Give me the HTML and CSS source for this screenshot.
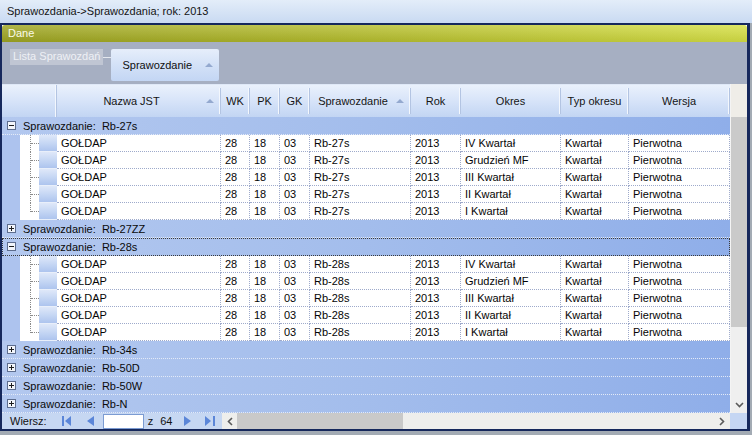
FILE: index.html
```html
<!DOCTYPE html>
<html lang="pl">
<head>
<meta charset="utf-8">
<title>Sprawozdania</title>
<link rel="stylesheet" href="styles.css">
</head>
<body>
<div class="titlebar">Sprawozdania-&gt;Sprawozdania; rok: 2013</div>
<div class="frame">
  <div class="dane">Dane</div>
  <div class="grouppanel">
    <div class="grp-label">Lista Sprawozdań</div>
    <div class="grp-line"></div>
    <div class="grp-btn"><span>Sprawozdanie</span><span class="sort"></span></div>
  </div>
  <div class="gridwrap">
    <div class="gridmain">
      <div class="hdr">
        <div class="hc"></div>
        <div class="hc sorted"><span class="ht">Nazwa JST</span><span class="sort"></span></div>
        <div class="hc">WK</div>
        <div class="hc">PK</div>
        <div class="hc">GK</div>
        <div class="hc sorted"><span class="ht">Sprawozdanie</span><span class="sort"></span></div>
        <div class="hc">Rok</div>
        <div class="hc">Okres</div>
        <div class="hc">Typ okresu</div>
        <div class="hc">Wersja</div>
      </div>
      <div class="rows">
        <div class="grow"><span class="exp minus"></span><span class="gt">Sprawozdanie:  Rb-27s</span></div>
        <div class="drow"><div class="strip"></div><div class="tree"></div><div class="ind"></div><div class="c">GOŁDAP</div><div class="c">28</div><div class="c">18</div><div class="c">03</div><div class="c">Rb-27s</div><div class="c">2013</div><div class="c">IV Kwartał</div><div class="c">Kwartał</div><div class="c">Pierwotna</div></div>
        <div class="drow"><div class="strip"></div><div class="tree"></div><div class="ind"></div><div class="c">GOŁDAP</div><div class="c">28</div><div class="c">18</div><div class="c">03</div><div class="c">Rb-27s</div><div class="c">2013</div><div class="c">Grudzień MF</div><div class="c">Kwartał</div><div class="c">Pierwotna</div></div>
        <div class="drow"><div class="strip"></div><div class="tree"></div><div class="ind"></div><div class="c">GOŁDAP</div><div class="c">28</div><div class="c">18</div><div class="c">03</div><div class="c">Rb-27s</div><div class="c">2013</div><div class="c">III Kwartał</div><div class="c">Kwartał</div><div class="c">Pierwotna</div></div>
        <div class="drow"><div class="strip"></div><div class="tree"></div><div class="ind"></div><div class="c">GOŁDAP</div><div class="c">28</div><div class="c">18</div><div class="c">03</div><div class="c">Rb-27s</div><div class="c">2013</div><div class="c">II Kwartał</div><div class="c">Kwartał</div><div class="c">Pierwotna</div></div>
        <div class="drow"><div class="strip"></div><div class="tree last"></div><div class="ind"></div><div class="c">GOŁDAP</div><div class="c">28</div><div class="c">18</div><div class="c">03</div><div class="c">Rb-27s</div><div class="c">2013</div><div class="c">I Kwartał</div><div class="c">Kwartał</div><div class="c">Pierwotna</div></div>
        <div class="grow"><span class="exp plus"></span><span class="gt">Sprawozdanie:  Rb-27ZZ</span></div>
        <div class="grow focus"><span class="exp minus"></span><span class="gt">Sprawozdanie:  Rb-28s</span></div>
        <div class="drow"><div class="strip"></div><div class="tree"></div><div class="ind"></div><div class="c">GOŁDAP</div><div class="c">28</div><div class="c">18</div><div class="c">03</div><div class="c">Rb-28s</div><div class="c">2013</div><div class="c">IV Kwartał</div><div class="c">Kwartał</div><div class="c">Pierwotna</div></div>
        <div class="drow"><div class="strip"></div><div class="tree"></div><div class="ind"></div><div class="c">GOŁDAP</div><div class="c">28</div><div class="c">18</div><div class="c">03</div><div class="c">Rb-28s</div><div class="c">2013</div><div class="c">Grudzień MF</div><div class="c">Kwartał</div><div class="c">Pierwotna</div></div>
        <div class="drow"><div class="strip"></div><div class="tree"></div><div class="ind"></div><div class="c">GOŁDAP</div><div class="c">28</div><div class="c">18</div><div class="c">03</div><div class="c">Rb-28s</div><div class="c">2013</div><div class="c">III Kwartał</div><div class="c">Kwartał</div><div class="c">Pierwotna</div></div>
        <div class="drow"><div class="strip"></div><div class="tree"></div><div class="ind"></div><div class="c">GOŁDAP</div><div class="c">28</div><div class="c">18</div><div class="c">03</div><div class="c">Rb-28s</div><div class="c">2013</div><div class="c">II Kwartał</div><div class="c">Kwartał</div><div class="c">Pierwotna</div></div>
        <div class="drow"><div class="strip"></div><div class="tree last"></div><div class="ind"></div><div class="c">GOŁDAP</div><div class="c">28</div><div class="c">18</div><div class="c">03</div><div class="c">Rb-28s</div><div class="c">2013</div><div class="c">I Kwartał</div><div class="c">Kwartał</div><div class="c">Pierwotna</div></div>
        <div class="grow"><span class="exp plus"></span><span class="gt">Sprawozdanie:  Rb-34s</span></div>
        <div class="grow"><span class="exp plus"></span><span class="gt">Sprawozdanie:  Rb-50D</span></div>
        <div class="grow"><span class="exp plus"></span><span class="gt">Sprawozdanie:  Rb-50W</span></div>
        <div class="grow"><span class="exp plus"></span><span class="gt">Sprawozdanie:  Rb-N</span></div>
      </div>
    </div>
    <div class="vscroll">
      <div class="vs-head"></div>
      <div class="vs-thumb"></div>
      <div class="vs-track"></div>
      <div class="vs-down"><svg width="9" height="6" viewBox="0 0 9 6"><path d="M1 1 L4.5 4.5 L8 1" fill="none" stroke="#5a5a5a" stroke-width="1.6"/></svg></div>
    </div>
  </div>
  <div class="navbar">
    <div class="nav">
      <span class="nav-label">Wiersz:</span>
      <svg class="ico first" width="10" height="10" viewBox="0 0 10 10"><rect x="0" y="0" width="2" height="10" fill="#5b86d8"/><path d="M9 0 L3 5 L9 10 Z" fill="#5b86d8"/></svg>
      <svg class="ico prev" width="7" height="10" viewBox="0 0 7 10"><path d="M7 0 L0 5 L7 10 Z" fill="#5b86d8"/></svg>
      <span class="nav-input"></span>
      <span class="nav-z">z</span>
      <span class="nav-n">64</span>
      <svg class="ico next" width="7" height="10" viewBox="0 0 7 10"><path d="M0 0 L7 5 L0 10 Z" fill="#5b86d8"/></svg>
      <svg class="ico last" width="10" height="10" viewBox="0 0 10 10"><path d="M0 0 L6 5 L0 10 Z" fill="#5b86d8"/><rect x="8" y="0" width="2" height="10" fill="#5b86d8"/></svg>
    </div>
    <div class="hscroll">
      <div class="hs-left"><svg width="6" height="9" viewBox="0 0 6 9"><path d="M5 1 L1.5 4.5 L5 8" fill="none" stroke="#5a5a5a" stroke-width="1.6"/></svg></div>
      <div class="hs-thumb"></div>
      <div class="hs-track"></div>
      <div class="hs-right"><svg width="6" height="9" viewBox="0 0 6 9"><path d="M1 1 L4.5 4.5 L1 8" fill="none" stroke="#5a5a5a" stroke-width="1.6"/></svg></div>
    </div>
    <div class="corner"></div>
  </div>
</div>
</body>
</html>
```

FILE: styles.css
```css
* { box-sizing: border-box; margin: 0; padding: 0; }
html, body { width: 752px; height: 435px; overflow: hidden; }
body {
  font-family: "Liberation Sans", Arial, sans-serif;
  font-size: 11px;
  color: #000;
  background: #a3abb4;
}

.titlebar {
  height: 23px;
  line-height: 23px;
  padding-left: 7px;
  color: #141414;
  background: linear-gradient(#e3edf9, #c9daf2);
}

.frame {
  width: 750px;
  height: 408px;
  border: 2px solid #16285c;
  border-right-width: 3px;
  display: flex;
  flex-direction: column;
  background: #fff;
}

.dane {
  height: 17px;
  line-height: 16px;
  padding-left: 6px;
  color: #fbfbe8;
  border-radius: 3px 3px 0 0;
  background:
    linear-gradient(rgba(255,255,255,0.18), rgba(0,0,0,0.08)),
    linear-gradient(to right, #9ea522, #b4bc2c 45%, #d6e044);
}

.grouppanel {
  height: 43px;
  background: #a6afc2;
  display: flex;
  align-items: flex-start;
  padding: 7px 0 0 8px;
}
.grp-label {
  height: 16px;
  line-height: 15px;
  padding: 0 3px;
  color: #eef0f5;
  background: #c0c6d3;
}
.grp-line {
  width: 8px;
  height: 1px;
  margin-top: 8px;
  background: #e4e8ef;
}
.grp-btn {
  width: 108px;
  height: 32px;
  display: flex;
  align-items: center;
  padding-left: 11px;
  gap: 13px;
  color: #101010;
  background: linear-gradient(#e6eefb, #d3e1f7 50%, #c3d6f4);
  border-radius: 2px;
}

.sort {
  width: 0;
  height: 0;
  border-left: 4px solid transparent;
  border-right: 4px solid transparent;
  border-bottom: 4px solid #94a9cf;
}

.gridwrap {
  display: flex;
  height: 329px;
}
.gridmain {
  width: 728px;
  display: flex;
  flex-direction: column;
}

.hdr, .drow {
  display: grid;
  grid-template-columns: 18px 19px 18px 164px 29px 30px 30px 101px 50px 100px 68px 101px;
}
.hdr {
  grid-template-columns: 55px 164px 29px 30px 30px 101px 50px 100px 68px 101px;
  height: 33px;
  background: linear-gradient(#eaf1fc, #d9e5f9 45%, #c2d5f3);
  border-top: 1px solid #dfe8f7;
}
.hc {
  display: flex;
  align-items: center;
  justify-content: center;
  color: #151515;
  border-right: 1px solid #b3c4e2;
  box-shadow: inset -1px 0 0 #f3f7fd;
  margin: 3px 0;
}
.hc:first-child { margin: 0; }
.hc.sorted { padding-right: 6px; }
.hc.sorted .ht { flex: 1; text-align: center; }

.rows { display: flex; flex-direction: column; }

.grow {
  height: 18px;
  display: flex;
  align-items: center;
  padding-left: 5px;
  color: #0a0a0a;
  background: linear-gradient(to right, #b3c8ef, #a3bdec 50%, #8faee9);
  border-bottom: 1px dotted #e3eaf7;
}
.grow.focus {
  outline: 1px dotted #3a3a3a;
  outline-offset: -1px;
}
.gt { white-space: pre; margin-left: 7px; }
.exp {
  width: 9px;
  height: 9px;
  border: 1px solid #5d6d8e;
  background: #f2f5fb;
  display: flex;
  align-items: center;
  justify-content: center;
}
.exp::before {
  content: "";
  width: 5px;
  height: 1px;
  background: #1d1d1d;
}
.exp.plus {
  background:
    linear-gradient(#1d1d1d, #1d1d1d) center / 1px 5px no-repeat,
    #f2f5fb;
}

.drow {
  height: 17px;
  background: #fff;
}
.strip {
  background: #adc3ee;
}
.tree {
  position: relative;
  border-bottom: 0;
}
.tree::before {
  content: "";
  position: absolute;
  left: 10px;
  top: 0;
  bottom: 0;
  border-left: 1px dotted #8a8a8a;
}
.tree.last::before { bottom: 8px; }
.tree::after {
  content: "";
  position: absolute;
  left: 11px;
  top: 8px;
  width: 8px;
  border-top: 1px dotted #8a8a8a;
}
.ind {
  background: linear-gradient(#dfe8f9, #c6d7f4 50%, #adc4ee);
  border-bottom: 1px solid #e9effa;
}
.c {
  padding-left: 4px;
  line-height: 16px;
  white-space: nowrap;
  overflow: hidden;
  border-right: 1px dotted #9eaacb;
  border-bottom: 1px dotted #9eaacb;
  color: #050505;
}

.vscroll {
  width: 17px;
  display: flex;
  flex-direction: column;
  border-left: 1px solid #f4f4f4;
}
.vs-head { height: 33px; background: #efede8; }
.vs-thumb { height: 210px; background: #cacaca; }
.vs-track { flex: 1; background: #efefef; }
.vs-down {
  height: 16px;
  background: #efefef;
  display: flex;
  align-items: center;
  justify-content: center;
}

.navbar {
  height: 16px;
  display: flex;
  background: #c6d7f2;
}
.nav {
  width: 220px;
  display: flex;
  align-items: center;
  padding-left: 8px;
  color: #111;
}
.nav-label { margin-right: 15px; }
.ico.prev { margin-left: 15px; }
.nav-input {
  width: 41px;
  height: 15px;
  margin-left: 9px;
  background: #fff;
  border: 1px solid #7b9bd2;
}
.nav-z { margin-left: 4px; }
.nav-n { margin-left: 7px; }
.ico.next { margin-left: 12px; }
.ico.last { margin-left: 14px; }

.hscroll {
  width: 508px;
  display: flex;
  background: #eeeeec;
}
.hs-left {
  width: 15px;
  display: flex;
  align-items: center;
  justify-content: center;
}
.hs-thumb { width: 166px; background: #c9c9c9; }
.hs-track { flex: 1; }
.hs-right {
  width: 17px;
  display: flex;
  align-items: center;
  justify-content: center;
}
.corner { flex: 1; background: #c5d6f3; }
```
